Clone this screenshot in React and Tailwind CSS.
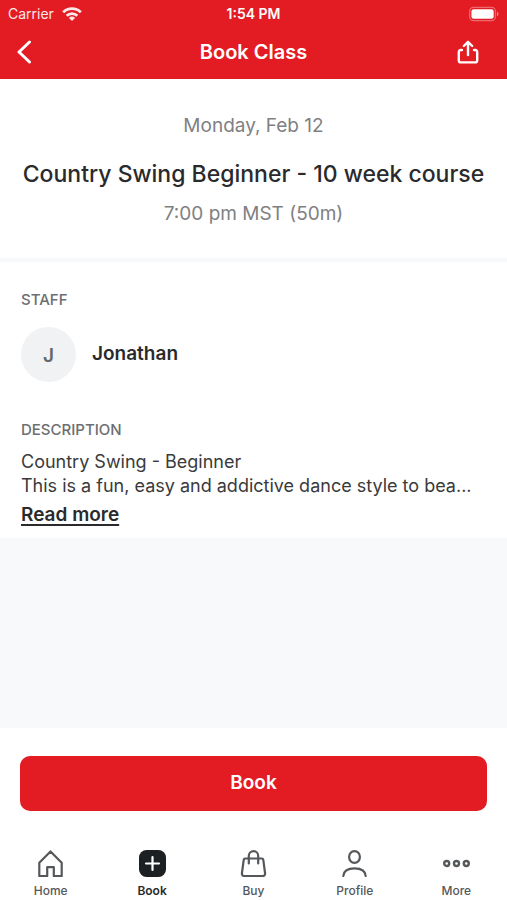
import React, { useState } from "react";

const HomeIcon = () => (
  <svg viewBox="0 0 27 27" className="w-[27px] h-[27px]" fill="none" stroke="currentColor" strokeWidth="2.200" strokeLinejoin="round">
    <path d="M2.300 12.700 13.500 1.400 24.700 12.700V26h-7.900v-8.800h-6.600V26H2.300z" />
  </svg>
);

const BookIcon = () => (
  <svg viewBox="0 0 27 27" className="w-[27px] h-[27px]" fill="none">
    <rect width="27" height="27" rx="7.500" fill="#1d2023" />
    <path d="M13.500 7v13M7 13.500h13" stroke="#fff" strokeWidth="2.200" strokeLinecap="round" />
  </svg>
);

const BuyIcon = () => (
  <svg viewBox="0 0 27 27" className="w-[27px] h-[27px]" fill="none" stroke="currentColor" strokeWidth="2.200" strokeLinejoin="round" strokeLinecap="round">
    <path d="M5.200 8.500h16.600a1.500 1.500 0 0 1 1.500 1.300l1.800 13.700a2.300 2.300 0 0 1-2.300 2.500H4.200a2.300 2.300 0 0 1-2.300-2.500l1.800-13.700a1.500 1.500 0 0 1 1.500-1.300z" />
    <path d="M8.800 13.500V5.900a4.700 4.700 0 0 1 9.400 0v7.600" />
  </svg>
);

const ProfileIcon = () => (
  <svg viewBox="0 0 27 27" className="w-[27px] h-[27px]" fill="none" stroke="currentColor" strokeWidth="2.200" strokeLinecap="round">
    <ellipse cx="13.500" cy="7" rx="5.400" ry="5.900" />
    <path d="M2.300 26c.3-5 4.500-7.700 11.200-7.700S24.400 21 24.700 26" />
  </svg>
);

const MoreIcon = () => (
  <svg viewBox="0 0 27 27" className="w-[27px] h-[27px]" fill="none" stroke="currentColor" strokeWidth="2.400">
    <circle cx="3.700" cy="13.500" r="2.500" />
    <circle cx="13.500" cy="13.500" r="2.500" />
    <circle cx="23.300" cy="13.500" r="2.500" />
  </svg>
);

const tabs = [
  { name: "Home", icon: HomeIcon },
  { name: "Book", icon: BookIcon },
  { name: "Buy", icon: BuyIcon },
  { name: "Profile", icon: ProfileIcon },
  { name: "More", icon: MoreIcon },
];

function StatusBar() {
  return (
    <div className="grid grid-cols-3 items-center h-7 px-2 text-sm">
      <div className="flex items-center gap-2 opacity-90">
        <span>Carrier</span>
        <svg viewBox="0 0 20 15" className="w-5 h-4" fill="none" stroke="currentColor" strokeWidth="2.800">
          <path d="M1.200 5.800a12.500 12.500 0 0 1 17.600 0" />
          <path d="M4.700 9.300a7.600 7.600 0 0 1 10.600 0" />
          <path d="M10 14.500 6.900 11.400a4.500 4.500 0 0 1 6.200 0z" fill="currentColor" stroke="none" />
        </svg>
      </div>
      <span className="text-center font-semibold">1:54 PM</span>
      <svg viewBox="0 0 31 15" className="w-[30px] h-4 justify-self-end" fill="none">
        <rect x="0.700" y="0.700" width="26.600" height="13.600" rx="4" stroke="#fff" strokeOpacity="0.350" strokeWidth="1.300" />
        <rect x="2.500" y="2.500" width="23" height="10" rx="2.300" fill="#fff" />
        <path d="M28.800 5v5c1.100-.4 1.700-1.400 1.700-2.500S29.900 5.400 28.800 5z" fill="#fff" fillOpacity="0.450" />
      </svg>
    </div>
  );
}

function App() {
  const [expanded, setExpanded] = useState(false);
  const [active, setActive] = useState("Book");

  return (
    <div className="min-h-screen flex flex-col bg-[#f8f9fb] font-[Inter,sans-serif] text-[#2a2a2c]">
      <header className="bg-[#e31b23] text-white">
        <StatusBar />
        <div className="grid grid-cols-[1fr_auto_1fr] items-center px-4 pt-1 pb-[7px]">
          <button aria-label="Back" className="justify-self-start">
            <svg viewBox="0 0 16 24" className="w-4 h-6" fill="none" stroke="currentColor" strokeWidth="3" strokeLinecap="round" strokeLinejoin="round">
              <path d="M13.500 2 3 12l10.500 10" />
            </svg>
          </button>
          <h1 className="text-xl leading-10 font-semibold">Book Class</h1>
          <button aria-label="Share" className="justify-self-end pr-3">
            <svg viewBox="0 0 22 24" className="w-[22px] h-6" fill="none" stroke="currentColor" strokeWidth="2.400" strokeLinecap="round" strokeLinejoin="round">
              <path d="M5 10H3.700A1.900 1.900 0 0 0 1.800 11.900v8.600A1.900 1.900 0 0 0 3.700 22.400h14.600a1.900 1.900 0 0 0 1.900-1.900v-8.600a1.900 1.900 0 0 0-1.900-1.900H17" />
              <path d="M11 15V2M6.800 6 11 1.800 15.200 6" />
            </svg>
          </button>
        </div>
      </header>

      <main className="flex-1">
        <section className="bg-white text-center px-4 pt-[33px] pb-[30px] border-b-4 border-[#f8f9fb]">
          <p className="text-[19px] leading-7 text-[#808082]">Monday, Feb 12</p>
          <h2 className="text-[23px] leading-9 font-medium mt-4">Country Swing Beginner - 10 week course</h2>
          <p className="text-[19px] leading-7 text-[#808082] mt-2">7:00 pm MST (50m)</p>
        </section>

        <section className="bg-white px-[21px] pt-7 pb-[6px]">
          <h3 className="text-[15px] leading-5 font-medium text-[#6c6e71]">STAFF</h3>
          <div className="flex items-center gap-4 mt-[17px]">
            <div className="flex items-center justify-center w-[55px] h-[55px] pt-1 rounded-full bg-[#f1f2f4] text-[19px] font-semibold text-[#66686b]">
              J
            </div>
            <span className="text-[19px] font-semibold">Jonathan</span>
          </div>

          <h3 className="text-[15px] leading-5 font-medium text-[#6c6e71] mt-[38px]">DESCRIPTION</h3>
          <div className="text-lg leading-6 mt-[10px] text-[#3a3a3c]">
            <p>Country Swing - Beginner</p>
            <p>This is a fun, easy and addictive dance style to bea...</p>
          </div>
          <button
            onClick={() => setExpanded(!expanded)}
            aria-expanded={expanded}
            className="block text-[19px] leading-[34px] font-semibold underline underline-offset-3 decoration-2"
          >
            Read more
          </button>
        </section>
      </main>

      <footer className="bg-white">
        <div className="px-5 pt-7">
          <button className="block w-full h-[55px] rounded-[10px] bg-[#e31b23] text-white text-[19px] font-semibold">Book</button>
        </div>
        <nav className="grid grid-cols-5 pt-[39px] pb-px">
          {tabs.map(({ name, icon: Icon }) => (
            <button
              key={name}
              onClick={() => setActive(name)}
              className={
                active === name
                  ? "flex flex-col items-center gap-1.5 text-xs font-semibold text-[#2a2a2c]"
                  : "flex flex-col items-center gap-1.5 text-xs font-medium text-[#55585b]"
              }
            >
              <Icon />
              {name}
            </button>
          ))}
        </nav>
      </footer>
    </div>
  );
}

export default App;
